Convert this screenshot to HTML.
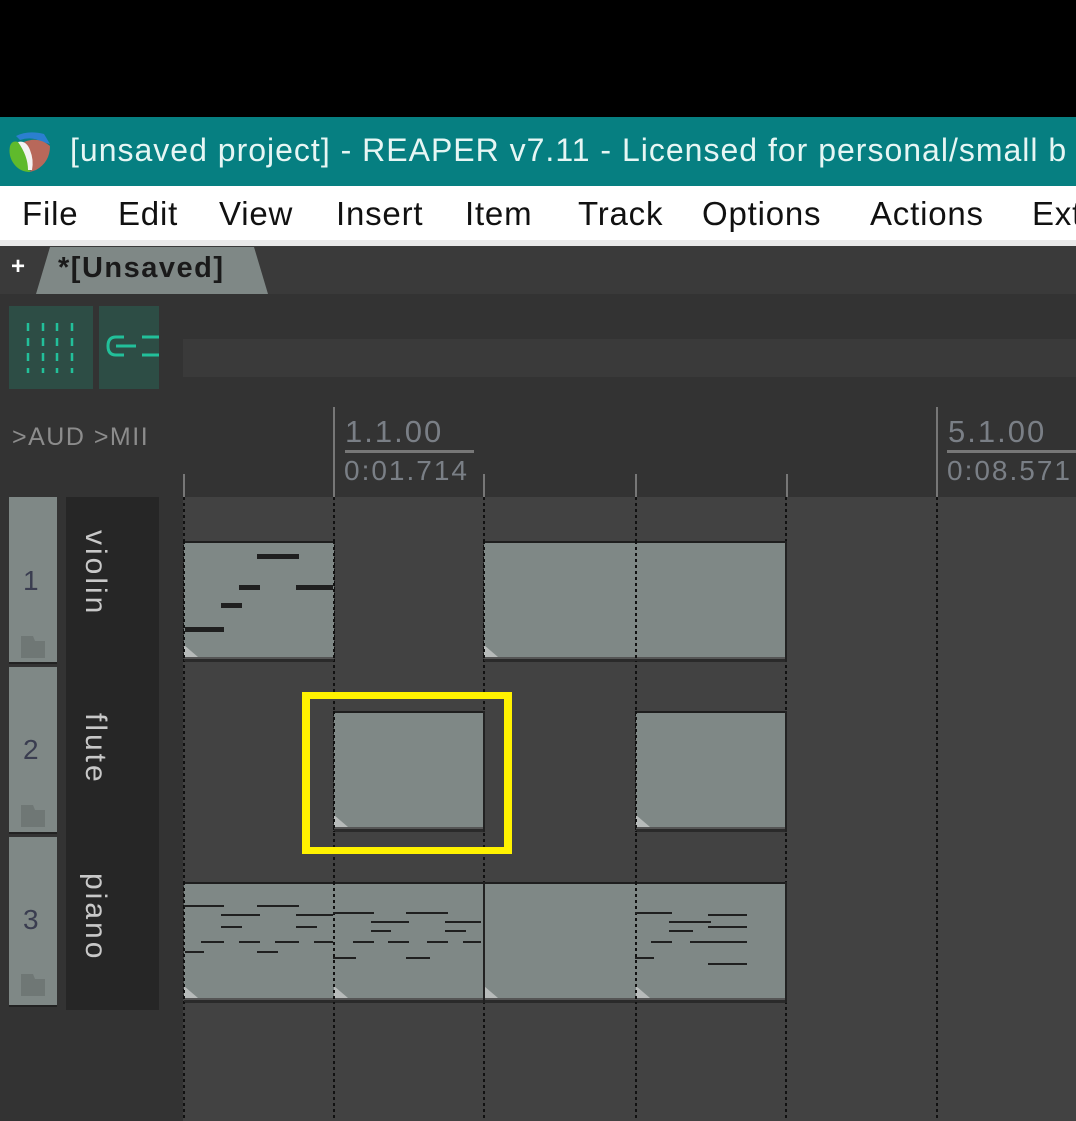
<!DOCTYPE html>
<html><head><meta charset="utf-8"><style>
*{margin:0;padding:0;box-sizing:border-box}
body{width:1076px;height:1121px;background:#000;position:relative;overflow:hidden;font-family:"Liberation Sans",sans-serif}
div,span{position:absolute}
.t{white-space:nowrap}
.m{top:195px;font-size:33px;color:#111;letter-spacing:0.8px}
.vl{width:2px;background:repeating-linear-gradient(#111 0 3px,transparent 3px 6px)}
.it{background:#7f8886;border-top:2px solid #1e1e1e}
.it .b{left:0;right:0;bottom:0;height:5px;background:#2a2a2a;border-top:2px solid #555}
.it .tri{left:0;bottom:5px;width:0;height:0;border-left:14px solid #b7bbba;border-top:12px solid transparent}
.n{background:#1f1f1f;height:5px}
.p{background:#1f1f1f;height:2px}
.rv{writing-mode:vertical-rl;color:#c8c8c8;font-size:30px;letter-spacing:3px}
.rt{color:#7a7f86;letter-spacing:2px}
</style></head><body>
<div style="left:0;top:117px;width:1076px;height:69px;background:#067f81"></div>
<svg style="position:absolute;left:6px;top:126px" width="48" height="48" viewBox="0 0 48 48">
<path d="M10 10 Q22 4 38 8 L44 18 L36 16 Q26 10 14 14Z" fill="#2b7fd0"/>
<path d="M18 16 Q32 10 44 20 Q44 36 30 44 L24 46 Q30 30 18 16Z" fill="#b8685a"/>
<path d="M4 20 Q6 14 12 16 Q22 26 24 46 Q14 46 8 38 Q2 30 4 20Z" fill="#5fba2c"/>
<path d="M12 16 Q20 14 24 24 Q28 34 26 44 L22 44 Q22 30 12 16Z" fill="#f3f3f3"/>
</svg>
<div class="t" style="left:70px;top:132px;font-size:32px;color:#e6f6f4;letter-spacing:1px">[unsaved project] - REAPER v7.11 - Licensed for personal/small b</div>
<div style="left:0;top:186px;width:1076px;height:56px;background:#fff"></div>
<div style="left:0;top:240px;width:1076px;height:6px;background:#e9e9e9"></div>
<div class="t m" style="left:22px">File</div>
<div class="t m" style="left:118px">Edit</div>
<div class="t m" style="left:219px">View</div>
<div class="t m" style="left:336px">Insert</div>
<div class="t m" style="left:465px">Item</div>
<div class="t m" style="left:578px">Track</div>
<div class="t m" style="left:702px">Options</div>
<div class="t m" style="left:870px">Actions</div>
<div class="t m" style="left:1032px">Ext</div>
<div style="left:0;top:246px;width:1076px;height:48px;background:#3a3a3a"></div>
<div class="t" style="left:11px;top:253px;font-size:24px;color:#fff;font-weight:bold">+</div>
<svg style="position:absolute;left:36px;top:247px" width="232" height="47"><polygon points="0,47 14,0 218,0 232,47" fill="#7f8886"/></svg>
<div class="t" style="left:58px;top:252px;font-size:29px;color:#1a1a1a;font-weight:bold;letter-spacing:1.5px">*[Unsaved]</div>
<div style="left:0;top:294px;width:1076px;height:827px;background:#333"></div>
<div style="left:9px;top:306px;width:84px;height:83px;background:#2d4d45"></div>
<svg style="position:absolute;left:26px;top:323px" width="50" height="50"><g stroke="#22c09a" stroke-width="2.5" stroke-dasharray="8 7"><line x1="2" y1="0" x2="2" y2="50"/><line x1="17" y1="0" x2="17" y2="50"/><line x1="31" y1="0" x2="31" y2="50"/><line x1="46" y1="0" x2="46" y2="50"/></g></svg>
<div style="left:99px;top:306px;width:60px;height:83px;background:#2d4d45"></div>
<svg style="position:absolute;left:106px;top:334px" width="53" height="30"><path d="M18 3 H10 Q2 3 2 12 Q2 21 10 21 H18" stroke="#22c09a" stroke-width="3" fill="none"/><line x1="10" y1="12" x2="30" y2="12" stroke="#22c09a" stroke-width="3"/><line x1="36" y1="3" x2="53" y2="3" stroke="#22c09a" stroke-width="3"/><line x1="36" y1="21" x2="53" y2="21" stroke="#22c09a" stroke-width="3"/></svg>
<div style="left:183px;top:339px;width:893px;height:38px;background:#3a3a3a"></div>
<div class="t" style="left:12px;top:423px;font-size:25px;color:#8c8c8c;letter-spacing:1.5px">&gt;AUD &gt;MII</div>
<div style="left:333px;top:407px;width:2px;height:90px;background:#777"></div>
<div style="left:936px;top:407px;width:2px;height:90px;background:#777"></div>
<div style="left:183px;top:474px;width:2px;height:23px;background:#777"></div>
<div style="left:483px;top:474px;width:2px;height:23px;background:#777"></div>
<div style="left:635px;top:474px;width:2px;height:23px;background:#777"></div>
<div style="left:786px;top:474px;width:2px;height:23px;background:#777"></div>
<div class="t rt" style="left:345px;top:414px;font-size:31px">1.1.00</div>
<div style="left:345px;top:450px;width:129px;height:3px;background:#777"></div>
<div class="t rt" style="left:344px;top:455px;font-size:28px">0:01.714</div>
<div class="t rt" style="left:948px;top:414px;font-size:31px">5.1.00</div>
<div style="left:947px;top:450px;width:129px;height:3px;background:#777"></div>
<div class="t rt" style="left:947px;top:455px;font-size:28px">0:08.571</div>
<div style="left:183px;top:497px;width:893px;height:624px;background:#424242"></div>
<div class="vl" style="left:183px;top:497px;height:624px"></div>
<div class="vl" style="left:333px;top:497px;height:624px"></div>
<div class="vl" style="left:483px;top:497px;height:624px"></div>
<div class="vl" style="left:635px;top:497px;height:624px"></div>
<div class="vl" style="left:785px;top:497px;height:624px"></div>
<div class="vl" style="left:936px;top:497px;height:624px"></div>
<div style="left:9px;top:497px;width:48px;height:167px;background:#7f8886;border-bottom:2px solid #222"></div>
<div style="left:9px;top:667px;width:48px;height:167px;background:#7f8886;border-bottom:2px solid #222"></div>
<div style="left:9px;top:837px;width:48px;height:170px;background:#7f8886;border-bottom:2px solid #222"></div>
<div class="t" style="left:23px;top:565px;font-size:28px;color:#3a3d50">1</div>
<div class="t" style="left:23px;top:734px;font-size:28px;color:#3a3d50">2</div>
<div class="t" style="left:23px;top:904px;font-size:28px;color:#3a3d50">3</div>
<svg style="position:absolute;left:21px;top:636px" width="24" height="22"><path d="M0 0H12L14 5H24V22H0Z" fill="#6f7775"/></svg>
<svg style="position:absolute;left:21px;top:805px" width="24" height="22"><path d="M0 0H12L14 5H24V22H0Z" fill="#6f7775"/></svg>
<svg style="position:absolute;left:21px;top:974px" width="24" height="22"><path d="M0 0H12L14 5H24V22H0Z" fill="#6f7775"/></svg>
<div style="left:66px;top:497px;width:93px;height:513px;background:#262626"></div>
<div class="rv t" style="left:78px;top:530px">violin</div>
<div class="rv t" style="left:78px;top:713px">flute</div>
<div class="rv t" style="left:78px;top:873px">piano</div>
<div class="it" style="left:184px;top:541px;width:150px;height:121px"><span class="b"></span><span class="tri"></span></div>
<div class="it" style="left:484px;top:541px;width:303px;height:121px"><span class="b"></span><span class="tri"></span></div>
<div class="it" style="left:334px;top:711px;width:151px;height:121px"><span class="b"></span><span class="tri"></span></div>
<div class="it" style="left:636px;top:711px;width:151px;height:121px"><span class="b"></span><span class="tri"></span></div>
<div class="it" style="left:184px;top:882px;width:603px;height:121px"><span class="b"></span><span class="tri"></span><span class="tri" style="left:150px"></span><span class="tri" style="left:300px"></span><span class="tri" style="left:452px"></span></div>
<div class="vl" style="left:333px;top:541px;height:121px"></div>
<div class="vl" style="left:635px;top:541px;height:121px"></div>
<div class="vl" style="left:183px;top:541px;height:121px"></div>
<div class="vl" style="left:483px;top:541px;height:121px"></div>
<div class="vl" style="left:785px;top:541px;height:121px;background:#222"></div>
<div class="vl" style="left:333px;top:711px;height:121px"></div>
<div class="vl" style="left:483px;top:711px;height:121px;background:#222"></div>
<div class="vl" style="left:635px;top:711px;height:121px"></div>
<div class="vl" style="left:785px;top:711px;height:121px;background:#222"></div>
<div class="vl" style="left:183px;top:882px;height:121px"></div>
<div class="vl" style="left:333px;top:882px;height:121px"></div>
<div class="vl" style="left:483px;top:882px;height:121px;background:#222"></div>
<div class="vl" style="left:635px;top:882px;height:121px"></div>
<div class="vl" style="left:785px;top:882px;height:121px;background:#222"></div>
<div class="n" style="left:257px;top:554px;width:42px"></div>
<div class="n" style="left:239px;top:585px;width:21px"></div>
<div class="n" style="left:296px;top:585px;width:37px"></div>
<div class="n" style="left:221px;top:603px;width:21px"></div>
<div class="n" style="left:185px;top:627px;width:39px"></div>
<div class="p" style="left:184px;top:905px;width:40px"></div>
<div class="p" style="left:257px;top:905px;width:42px"></div>
<div class="p" style="left:221px;top:914px;width:39px"></div>
<div class="p" style="left:296px;top:914px;width:37px"></div>
<div class="p" style="left:221px;top:926px;width:21px"></div>
<div class="p" style="left:296px;top:926px;width:21px"></div>
<div class="p" style="left:201px;top:941px;width:23px"></div>
<div class="p" style="left:239px;top:941px;width:21px"></div>
<div class="p" style="left:275px;top:941px;width:24px"></div>
<div class="p" style="left:314px;top:941px;width:19px"></div>
<div class="p" style="left:185px;top:951px;width:19px"></div>
<div class="p" style="left:257px;top:951px;width:21px"></div>
<div class="p" style="left:333px;top:912px;width:41px"></div>
<div class="p" style="left:406px;top:912px;width:42px"></div>
<div class="p" style="left:371px;top:921px;width:38px"></div>
<div class="p" style="left:445px;top:921px;width:36px"></div>
<div class="p" style="left:371px;top:930px;width:20px"></div>
<div class="p" style="left:445px;top:930px;width:21px"></div>
<div class="p" style="left:353px;top:941px;width:21px"></div>
<div class="p" style="left:388px;top:941px;width:21px"></div>
<div class="p" style="left:427px;top:941px;width:21px"></div>
<div class="p" style="left:463px;top:941px;width:18px"></div>
<div class="p" style="left:333px;top:957px;width:23px"></div>
<div class="p" style="left:406px;top:957px;width:24px"></div>
<div class="p" style="left:635px;top:912px;width:37px"></div>
<div class="p" style="left:708px;top:914px;width:39px"></div>
<div class="p" style="left:669px;top:921px;width:42px"></div>
<div class="p" style="left:708px;top:926px;width:39px"></div>
<div class="p" style="left:669px;top:930px;width:24px"></div>
<div class="p" style="left:651px;top:941px;width:21px"></div>
<div class="p" style="left:690px;top:941px;width:57px"></div>
<div class="p" style="left:635px;top:957px;width:19px"></div>
<div class="p" style="left:708px;top:963px;width:39px"></div>
<div style="left:302px;top:692px;width:210px;height:162px;border:8px solid #fff200;border-top-width:7px;border-bottom-width:7px"></div>
</body></html>
